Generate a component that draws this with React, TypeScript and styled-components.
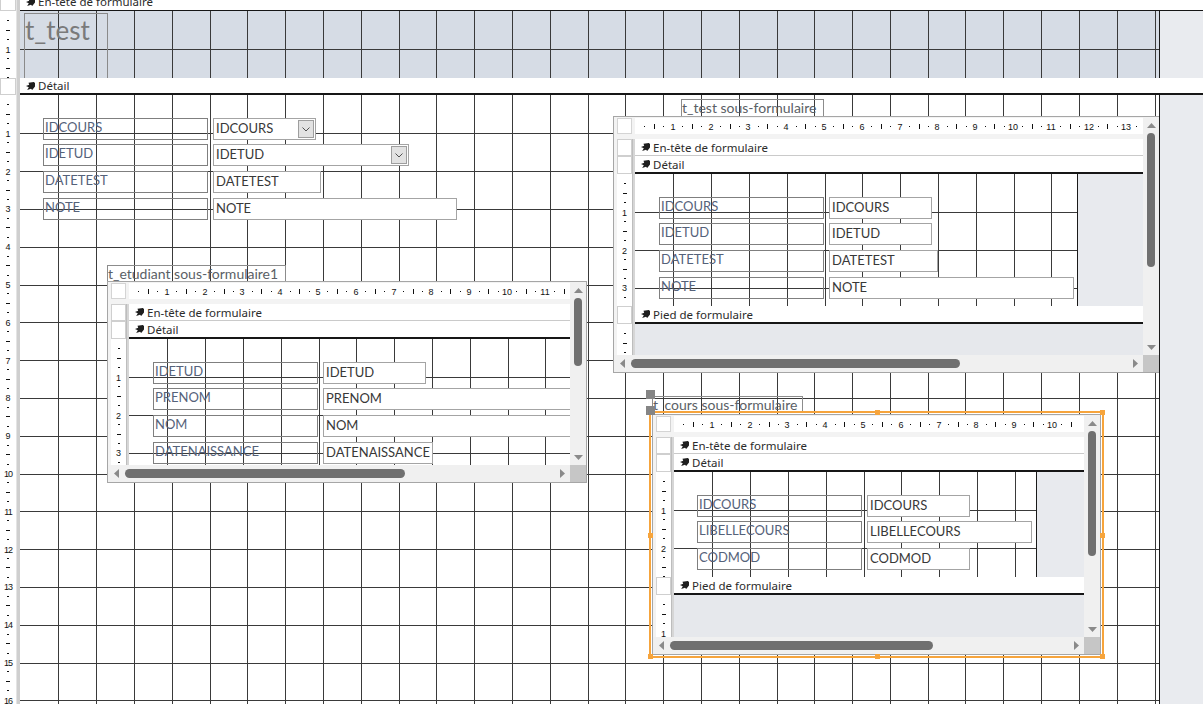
import React from "react";
import styled, { createGlobalStyle, css } from "styled-components";

const CM = 37.8;
const Q = CM / 4;

const GlobalStyle = createGlobalStyle`
  html, body { margin: 0; padding: 0; background: #ffffff; }
  body { font-family: "Noto Sans", "Open Sans", Arial, sans-serif; }
  * { box-sizing: border-box; }
`;

const Screen = styled.div`
  width: 1203px;
  height: 704px;
  overflow: hidden;
  background: #ffffff;
`;

const Scroller = styled.div`
  margin-top: -7px;
  display: flex;
  flex-direction: column;
`;

const Row = styled.div<{ $h: number }>`
  display: flex;
  flex: none;
  height: ${(p) => p.$h}px;
`;

const RulerCol = styled.div`
  width: 16px;
  flex: none;
  background: #ffffff;
  overflow: hidden;
  display: flex;
`;

const SelectorBox = styled.div<{ $h?: number }>`
  flex: none;
  width: 100%;
  height: ${(p) => (p.$h ? `${p.$h}px` : "100%")};
  background: #ffffff;
  border: 1px solid #cfcfcf;
`;

const Sep = styled.div`
  width: 4px;
  flex: none;
  background: #cfcfcf;
  border-left: 1px solid #e4e4e4;
`;

const SectionBar = styled.div<{ $h?: number; $line: "thin" | "light" | "dark" }>`
  display: flex;
  align-items: center;
  gap: 3px;
  padding-left: 6px;
  background: #ffffff;
  color: #2b2b2b;
  font-family: "Noto Sans", "Open Sans", sans-serif;
  font-size: 11.5px;
  white-space: nowrap;
  overflow: hidden;
  ${(p) => (p.$h ? css`height: ${p.$h}px; flex: none;` : css`flex: 1;`)}
  border-bottom: ${(p) =>
    p.$line === "light" ? "1px solid #cacaca" : p.$line === "dark" ? "2px solid #161616" : "1px solid #161616"};
`;

const IconSvg = styled.svg`
  flex: none;
  fill: #1e1e1e;
`;

const BarIcon = () => (
  <IconSvg width="9" height="8" viewBox="0 0 9 8">
    <path d="M2.5 0.8 L7.8 0 L9 1 L9 4.6 L6.2 8 L5 6.8 L1.2 8 L2.8 5.2 L0 4 L3.2 2.8 Z" />
  </IconSvg>
);

const Filler = styled.div<{ $bg?: string }>`
  flex: 1;
  min-width: 0;
  background: ${(p) => p.$bg ?? "#e8eaee"};
`;

const Canvas = styled.div<{ $w?: number; $bg?: string; $edge?: boolean }>`
  position: relative;
  overflow: hidden;
  background: ${(p) => p.$bg ?? "#ffffff"};
  ${(p) => (p.$w ? css`width: ${p.$w}px; flex: none;` : css`flex: 1; min-width: 0;`)}
  ${(p) => p.$edge && css`border-right: 1px solid #1a1a1a;`}
`;

const GridSvg = styled.svg`
  position: absolute;
  left: 0;
  top: 0;
  fill: #3a3a3a;
  pointer-events: none;
`;

const GridLines: React.FC<{ w: number; h: number; ox?: number; oy?: number }> = ({ w, h, ox = 0.5, oy = 0.5 }) => {
  const xs: number[] = [];
  const ys: number[] = [];
  for (let k = 1; k * CM + ox < w; k++) xs.push(Math.round(k * CM + ox));
  for (let k = 1; k * CM + oy < h; k++) ys.push(Math.round(k * CM + oy));
  return (
    <GridSvg width={w} height={h} shapeRendering="crispEdges">
      {xs.map((x) => (
        <rect key={`x${x}`} x={x} y={0} width={1} height={h} />
      ))}
      {ys.map((y) => (
        <rect key={`y${y}`} x={0} y={y} width={w} height={1} />
      ))}
    </GridSvg>
  );
};

const RulerSvg = styled.svg`
  flex: none;
  display: block;
  fill: #111111;
  font-family: "Liberation Sans", "DejaVu Sans", sans-serif;
`;

const VRuler: React.FC<{ h: number; w?: number }> = ({ h, w = 15 }) => {
  const marks: React.ReactNode[] = [];
  const cx = w / 2;
  for (let k = 1; k * Q < h + 6; k++) {
    const y = Math.round(k * Q);
    if (k % 4 === 0) {
      const n = k / 4;
      marks.push(
        <text key={k} x={cx} y={y + 3.5} fontSize={9} textAnchor="middle" letterSpacing={n > 9 ? -1 : 0}>
          {n}
        </text>
      );
    } else if (k % 4 === 2) {
      marks.push(<rect key={k} x={Math.round(cx) - 2} y={y} width={4} height={1} />);
    } else {
      marks.push(<rect key={k} x={Math.round(cx) - 1} y={y} width={2} height={1} />);
    }
  }
  return (
    <RulerSvg width={w} height={h} shapeRendering="crispEdges">
      {marks}
    </RulerSvg>
  );
};

const HRuler: React.FC<{ w: number }> = ({ w }) => {
  const marks: React.ReactNode[] = [];
  for (let k = 1; k * Q < w - 4; k++) {
    const x = Math.round(k * Q);
    if (k % 4 === 0) {
      marks.push(
        <text key={k} x={x} y={12} fontSize={9} textAnchor="middle">
          {k / 4}
        </text>
      );
    } else if (k % 4 === 2) {
      marks.push(<rect key={k} x={x} y={6} width={1} height={5} />);
    } else {
      marks.push(<rect key={k} x={x} y={8} width={1} height={1} />);
    }
  }
  return (
    <RulerSvg width={w} height={16}>
      {marks}
    </RulerSvg>
  );
};

type Pos = { $x: number; $y: number; $w: number };

const Label = styled.div<Pos>`
  position: absolute;
  left: ${(p) => p.$x}px;
  top: ${(p) => p.$y}px;
  width: ${(p) => p.$w}px;
  height: 22px;
  border: 1px solid #7f7f7f;
  font-family: Lato, "Open Sans", sans-serif;
  font-size: 13px;
  line-height: 16px;
  color: #55627a;
  padding-left: 1px;
  white-space: nowrap;
  overflow: hidden;
`;

const Field = styled.div<Pos>`
  position: absolute;
  left: ${(p) => p.$x}px;
  top: ${(p) => p.$y}px;
  width: ${(p) => p.$w}px;
  height: 22px;
  display: flex;
  background: #ffffff;
  border: 1px solid #a4a4a4;
  font-family: Lato, "Open Sans", sans-serif;
  font-size: 13px;
  line-height: 18px;
  color: #383838;
  white-space: nowrap;
  overflow: hidden;
`;

const FieldText = styled.span`
  flex: 1;
  padding-left: 2px;
  overflow: hidden;
`;

const DropBtn = styled.span`
  flex: none;
  width: 16px;
  margin: 1px;
  background: #e2e2e2;
  border: 1px solid #9e9e9e;
  display: flex;
  align-items: center;
  justify-content: center;
`;

const ChevronSvg = styled.svg`
  fill: none;
  stroke: #505050;
  stroke-width: 1;
`;

const Combo: React.FC<Pos & { text: string }> = ({ text, ...pos }) => (
  <Field {...pos}>
    <FieldText>{text}</FieldText>
    <DropBtn>
      <ChevronSvg width="8" height="5" viewBox="0 0 8 5">
        <path d="M0.5 0.5 L4 4 L7.5 0.5" />
      </ChevronSvg>
    </DropBtn>
  </Field>
);

const TextBox: React.FC<Pos & { text: string }> = ({ text, ...pos }) => (
  <Field {...pos}>
    <FieldText>{text}</FieldText>
  </Field>
);

const HeaderTitle = styled.div`
  position: absolute;
  left: 4px;
  top: 2px;
  width: 84px;
  height: 70px;
  border: 1px solid #8a8a8a;
  font-family: Lato, "Open Sans", sans-serif;
  font-size: 26px;
  line-height: 30px;
  padding-top: 1px;
  color: #7a7a7a;
  white-space: nowrap;
`;

const SubTitle = styled.div<Pos & { $h: number }>`
  position: absolute;
  left: ${(p) => p.$x}px;
  top: ${(p) => p.$y}px;
  width: ${(p) => p.$w}px;
  height: ${(p) => p.$h}px;
  border: 1px solid #8c8c8c;
  border-bottom: none;
  font-family: Lato, "Open Sans", sans-serif;
  font-size: 14px;
  line-height: 15px;
  color: #5b5f66;
  white-space: nowrap;
  overflow: hidden;
`;

const MoveHandle = styled.div<{ $x: number; $y: number }>`
  position: absolute;
  left: ${(p) => p.$x}px;
  top: ${(p) => p.$y}px;
  width: 9px;
  height: 9px;
  background: #858585;
`;

/* ---------- Subform ---------- */

const Frame = styled.div<{ $x: number; $y: number; $w: number; $h: number; $selected?: boolean }>`
  position: absolute;
  left: ${(p) => p.$x}px;
  top: ${(p) => p.$y}px;
  width: ${(p) => p.$w}px;
  height: ${(p) => p.$h}px;
  border: 1px solid #a6a6a6;
  background: #f3f3f3;
  display: grid;
  grid-template-columns: 21px 1fr 16px;
  grid-template-rows: 22px 1fr 17px;
  ${(p) =>
    p.$selected &&
    css`
      outline: 2px solid #f6a43c;
      outline-offset: 1px;
    `}
`;

const Corner = styled.div`
  grid-column: 1;
  grid-row: 1;
  margin: 1px 3px 5px 3px;
  background: #ffffff;
  border: 1px solid #d4d4d4;
`;

const HRulerBox = styled.div`
  grid-column: 2;
  grid-row: 1;
  margin: 1px 0 5px 0;
  background: #ffffff;
  overflow: hidden;
`;

const VScroll = styled.div`
  grid-column: 3;
  grid-row: 1 / 3;
  display: flex;
  flex-direction: column;
  align-items: center;
  background: #f0f0f0;
`;

const HScroll = styled.div`
  grid-column: 1 / 3;
  grid-row: 3;
  display: flex;
  align-items: center;
  background: #f0f0f0;
`;

const ScrollCorner = styled.div`
  grid-column: 3;
  grid-row: 3;
  background: #c6c6c6;
`;

const ArrowBox = styled.div`
  flex: none;
  width: 16px;
  height: 16px;
  display: flex;
  align-items: center;
  justify-content: center;
`;

const ArrowSvg = styled.svg`
  fill: #8a8a8a;
`;

const Track = styled.div`
  flex: 1;
`;

const VThumb = styled.div<{ $len: number }>`
  flex: none;
  width: 8px;
  height: ${(p) => p.$len}px;
  border-radius: 4px;
  background: #707070;
`;

const HThumb = styled.div<{ $len: number }>`
  flex: none;
  height: 9px;
  width: ${(p) => p.$len}px;
  margin-left: 1px;
  border-radius: 5px;
  background: #707070;
`;

const Body = styled.div`
  grid-column: 1 / 3;
  grid-row: 2;
  display: flex;
  overflow: hidden;
`;

const LeftCol = styled.div`
  width: 15px;
  margin-left: 3px;
  flex: none;
  display: flex;
  flex-direction: column;
  background: #ffffff;
  overflow: hidden;
`;

const SubSep = styled.div`
  width: 3px;
  flex: none;
  background: #d6d6d6;
  border-left: 1px solid #bdbdbd;
`;

const Sections = styled.div`
  flex: 1;
  min-width: 0;
  display: flex;
  flex-direction: column;
  overflow: hidden;
`;

const SectionBody = styled.div<{ $h?: number }>`
  display: flex;
  ${(p) => (p.$h ? css`height: ${p.$h}px; flex: none;` : css`flex: 1;`)}
`;

const FooterArea = styled.div`
  flex: 1;
  background: #e6e8ec;
`;

const SelHandle = styled.div<{ $l: string; $t: string }>`
  position: absolute;
  left: ${(p) => p.$l};
  top: ${(p) => p.$t};
  width: 5px;
  height: 5px;
  background: #f6a43c;
`;

type SubformProps = {
  x: number;
  y: number;
  w: number;
  h: number;
  detailH?: number;
  formW?: number;
  footer?: boolean;
  vThumb: number;
  hThumb: number;
  selected?: boolean;
  children: React.ReactNode;
};

const Subform: React.FC<SubformProps> = ({ x, y, w, h, detailH, formW, footer, vThumb, hThumb, selected, children }) => {
  const bodyH = h - 2 - 22 - 17;
  const secW = w - 2 - 21 - 16;
  const dH = detailH ?? bodyH - 35;
  const fH = Math.max(0, bodyH - 35 - dH - 18);
  const gridW = formW ? formW - 1 : secW;
  const spots = ["-5px", `calc(50% - 2px)`, "calc(100% + 0px)"];
  return (
    <Frame $x={x} $y={y} $w={w} $h={h} $selected={selected}>
      <Corner />
      <HRulerBox>
        <HRuler w={secW} />
      </HRulerBox>
      <VScroll>
        <ArrowBox>
          <ArrowSvg width="9" height="5" viewBox="0 0 9 5">
            <polygon points="0,5 4.5,0 9,5" />
          </ArrowSvg>
        </ArrowBox>
        <VThumb $len={vThumb} />
        <Track />
        <ArrowBox>
          <ArrowSvg width="9" height="5" viewBox="0 0 9 5">
            <polygon points="0,0 9,0 4.5,5" />
          </ArrowSvg>
        </ArrowBox>
      </VScroll>
      <Body>
        <LeftCol>
          <SelectorBox $h={17} />
          <SelectorBox $h={18} />
          <VRuler h={dH} />
          {footer && (
            <>
              <SelectorBox $h={18} />
              <VRuler h={fH} />
            </>
          )}
        </LeftCol>
        <SubSep />
        <Sections>
          <SectionBar $h={17} $line="light">
            <BarIcon />
            En-tête de formulaire
          </SectionBar>
          <SectionBar $h={18} $line="dark">
            <BarIcon />
            Détail
          </SectionBar>
          <SectionBody $h={footer ? dH : undefined}>
            <Canvas $w={formW} $edge={!!formW}>
              <GridLines w={gridW} h={dH} />
              {children}
            </Canvas>
            {formW && <Filler />}
          </SectionBody>
          {footer && (
            <>
              <SectionBar $h={18} $line="dark">
                <BarIcon />
                Pied de formulaire
              </SectionBar>
              <FooterArea />
            </>
          )}
        </Sections>
      </Body>
      <HScroll>
        <ArrowBox>
          <ArrowSvg width="5" height="9" viewBox="0 0 5 9">
            <polygon points="5,0 5,9 0,4.5" />
          </ArrowSvg>
        </ArrowBox>
        <HThumb $len={hThumb} />
        <Track />
        <ArrowBox>
          <ArrowSvg width="5" height="9" viewBox="0 0 5 9">
            <polygon points="0,0 5,4.5 0,9" />
          </ArrowSvg>
        </ArrowBox>
      </HScroll>
      <ScrollCorner />
      {selected &&
        spots.flatMap((l, i) =>
          spots.map((t, j) =>
            i === 1 && j === 1 ? null : <SelHandle key={`${i}-${j}`} $l={l} $t={t} />
          )
        )}
    </Frame>
  );
};

/* ---------- data ---------- */

type Ctl = { label: string; field: string; w: number; combo?: boolean };

const ROWS = [23, 49, 76, 103];

const mainCtls: Ctl[] = [
  { label: "IDCOURS", field: "IDCOURS", w: 103, combo: true },
  { label: "IDETUD", field: "IDETUD", w: 196, combo: true },
  { label: "DATETEST", field: "DATETEST", w: 108 },
  { label: "NOTE", field: "NOTE", w: 244 },
];

const etudiantCtls: Ctl[] = [
  { label: "IDETUD", field: "IDETUD", w: 103 },
  { label: "PRENOM", field: "PRENOM", w: 250 },
  { label: "NOM", field: "NOM", w: 250 },
  { label: "DATENAISSANCE", field: "DATENAISSANCE", w: 110 },
];

const testCtls: Ctl[] = [
  { label: "IDCOURS", field: "IDCOURS", w: 103 },
  { label: "IDETUD", field: "IDETUD", w: 103 },
  { label: "DATETEST", field: "DATETEST", w: 109 },
  { label: "NOTE", field: "NOTE", w: 245 },
];

const coursCtls: Ctl[] = [
  { label: "IDCOURS", field: "IDCOURS", w: 103 },
  { label: "LIBELLECOURS", field: "LIBELLECOURS", w: 165 },
  { label: "CODMOD", field: "CODMOD", w: 103 },
];

const Controls: React.FC<{ ctls: Ctl[]; lx: number; fx: number }> = ({ ctls, lx, fx }) => (
  <>
    {ctls.map((c, i) => (
      <React.Fragment key={c.label}>
        <Label $x={lx} $y={ROWS[i]} $w={165}>
          {c.label}
        </Label>
        {c.combo ? (
          <Combo $x={fx} $y={ROWS[i]} $w={c.w} text={c.field} />
        ) : (
          <TextBox $x={fx} $y={ROWS[i]} $w={c.w} text={c.field} />
        )}
      </React.Fragment>
    ))}
  </>
);

export default function App() {
  return (
    <>
      <GlobalStyle />
      <Screen>
        <Scroller>
          <Row $h={18}>
            <RulerCol>
              <SelectorBox />
            </RulerCol>
            <Sep />
            <SectionBar $line="thin">
              <BarIcon />
              En-tête de formulaire
            </SectionBar>
          </Row>

          <Row $h={67}>
            <RulerCol>
              <VRuler h={67} w={16} />
            </RulerCol>
            <Sep />
            <Canvas $w={1140} $bg="#d6dce5" $edge>
              <GridLines w={1139} h={67} oy={0} />
              <HeaderTitle>t_test</HeaderTitle>
            </Canvas>
            <Filler $bg="#e9ebef" />
          </Row>

          <Row $h={17}>
            <RulerCol>
              <SelectorBox />
            </RulerCol>
            <Sep />
            <SectionBar $line="dark">
              <BarIcon />
              Détail
            </SectionBar>
          </Row>

          <Row $h={620}>
            <RulerCol>
              <VRuler h={620} w={16} />
            </RulerCol>
            <Sep />
            <Canvas $w={1140} $edge>
              <GridLines w={1139} h={620} />
              <Controls ctls={mainCtls} lx={23} fx={193} />

              <SubTitle $x={87} $y={170} $w={179} $h={16}>
                t_etudiant sous-formulaire1
              </SubTitle>
              <Subform x={87} y={186} w={480} h={202} vThumb={68} hThumb={280}>
                <Controls ctls={etudiantCtls} lx={24} fx={194} />
              </Subform>

              <SubTitle $x={661} $y={4} $w={143} $h={17}>
                t_test sous-formulaire
              </SubTitle>
              <Subform x={593} y={21} w={547} h={257} detailH={132} formW={443} footer vThumb={134} hThumb={329}>
                <Controls ctls={testCtls} lx={24} fx={194} />
              </Subform>

              <SubTitle $x={632} $y={301} $w={151} $h={16}>
                t_cours sous-formulaire
              </SubTitle>
              <Subform x={632} y={319} w={449} h={241} detailH={105} formW={363} footer vThumb={125} hThumb={263} selected>
                <Controls ctls={coursCtls} lx={23} fx={193} />
              </Subform>
              <MoveHandle $x={626} $y={295} />
              <MoveHandle $x={626} $y={311} />
            </Canvas>
            <Filler $bg="#e9ebef" />
          </Row>
        </Scroller>
      </Screen>
    </>
  );
}
